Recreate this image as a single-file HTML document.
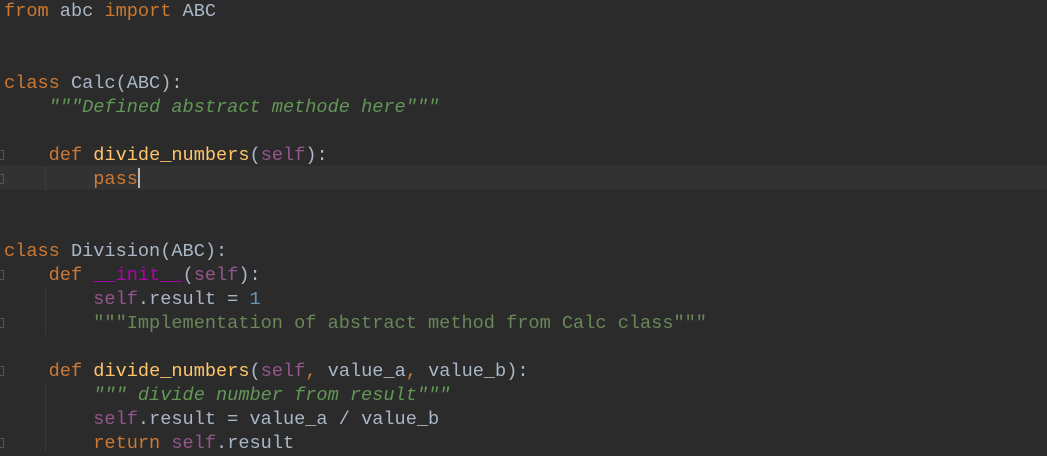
<html><head><style>
body{margin:0;background:#2b2b2b;width:1047px;height:451px;overflow:hidden;position:relative}
pre{margin:0;position:absolute;left:4px;top:0px;font:18.6px/24px "Liberation Mono",monospace;color:#a9b7c6;white-space:pre}
.k{color:#cc7832}.f{color:#ffc66d}.s{color:#94558d}.d{color:#629755;font-style:italic}.g{color:#6a8759}.n{color:#6897bb}.m{color:#b200b2}
.cur{position:absolute;left:0;top:166px;width:1047px;height:24px;background:#323232}
.ig{position:absolute;left:45px;width:1px;background:#3b3b3b}
.fm{position:absolute;left:0;width:3px;height:8px;border:1px solid #555;border-left:none}
.caret{display:inline-block;width:2px;height:20px;background:#bbb;vertical-align:-4px}
</style></head><body>
<div class="cur"></div>
<div class="ig" style="top:166px;height:24px"></div>
<div class="ig" style="top:286px;height:48px"></div>
<div class="ig" style="top:382px;height:69px"></div>
<div class="fm" style="top:150px"></div><div class="fm" style="top:174px"></div>
<div class="fm" style="top:270px"></div><div class="fm" style="top:318px"></div>
<div class="fm" style="top:366px"></div><div class="fm" style="top:438px"></div>
<pre><span class="k">from</span> abc <span class="k">import</span> ABC


<span class="k">class</span> Calc(ABC):
    <span class="d">"""Defined abstract methode here"""</span>

    <span class="k">def</span> <span class="f">divide_numbers</span>(<span class="s">self</span>):
        <span class="k">pass</span><span class="caret"></span>


<span class="k">class</span> Division(ABC):
    <span class="k">def</span> <span class="m">__init__</span>(<span class="s">self</span>):
        <span class="s">self</span>.result = <span class="n">1</span>
        <span class="g">"""Implementation of abstract method from Calc class"""</span>

    <span class="k">def</span> <span class="f">divide_numbers</span>(<span class="s">self</span><span class="k">,</span> value_a<span class="k">,</span> value_b):
        <span class="d">""" divide number from result"""</span>
        <span class="s">self</span>.result = value_a / value_b
        <span class="k">return</span> <span class="s">self</span>.result
</pre>
</body></html>
